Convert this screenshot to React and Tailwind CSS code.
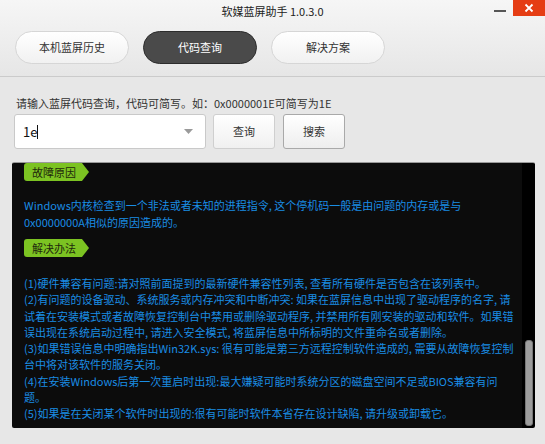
import React from "react";

const solutionLines = [
  "(1)硬件兼容有问题:请对照前面提到的最新硬件兼容性列表, 查看所有硬件是否包含在该列表中。",
  "(2)有问题的设备驱动、系统服务或内存冲突和中断冲突: 如果在蓝屏信息中出现了驱动程序的名字, 请",
  "试着在安装模式或者故障恢复控制台中禁用或删除驱动程序, 并禁用所有刚安装的驱动和软件。如果错",
  "误出现在系统启动过程中, 请进入安全模式, 将蓝屏信息中所标明的文件重命名或者删除。",
  "(3)如果错误信息中明确指出Win32K.sys: 很有可能是第三方远程控制软件造成的, 需要从故障恢复控制",
  "台中将对该软件的服务关闭。",
  "(4)在安装Windows后第一次重启时出现:最大嫌疑可能时系统分区的磁盘空间不足或BIOS兼容有问",
  "题。",
  "(5)如果是在关闭某个软件时出现的:很有可能时软件本省存在设计缺陷, 请升级或卸载它。",
];

function Tag({ children }) {
  return (
    <div className="w-[65px] h-[18px] bg-[#7cc322] rounded-l-[3px] pl-[8px] text-[11px] leading-[18px] text-[#1f2a0c] [clip-path:polygon(0_0,calc(100%-7px)_0,100%_50%,calc(100%-7px)_100%,0_100%)]">
      {children}
    </div>
  );
}

function TabButton({ label, active }) {
  return (
    <div
      className={`w-[114px] h-[33px] rounded-full flex items-center justify-center text-[11px] border ${
        active
          ? "bg-[#4a4a4a] border-[#2c2c2c] text-white"
          : "bg-gradient-to-b from-white to-[#f1f1f1] border-[#d6d6d6] text-[#333]"
      }`}
    >
      {label}
    </div>
  );
}

export default function App() {
  return (
    <div className="w-[545px] h-[444px] overflow-hidden bg-[#e7e7e7] flex flex-col font-['Noto_Sans_CJK_SC',sans-serif] text-[#333]">
      {/* title bar + tabs */}
      <div className="h-[77px] bg-gradient-to-b from-[#f6f6f6] to-[#e6e6e6] border-b border-[#cbcbcb]">
        <div className="h-[31px] flex items-start">
          <div className="flex-1" />
          <div className="pt-[3px] text-[11px] leading-[16px] text-[#222]">软媒蓝屏助手 1.0.3.0</div>
          <div className="flex-1 flex justify-end items-start">
            <div className="mt-[10px] mr-[7px] w-[12px] h-[2px] bg-[#555]" />
            <div className="w-[32px] h-[16px] bg-[#e53d14] flex items-center justify-center">
              <svg width="10" height="10" viewBox="0 0 10 10">
                <path d="M1.5 1.5 L8.5 8.5 M8.5 1.5 L1.5 8.5" stroke="white" strokeWidth="1.8" />
              </svg>
            </div>
          </div>
        </div>
        <div className="flex gap-[14px] pl-[15px]">
          <TabButton label="本机蓝屏历史" />
          <TabButton label="代码查询" active />
          <TabButton label="解决方案" />
        </div>
      </div>

      {/* query area */}
      <div className="pl-[12px] pt-[18px]">
        <div className="pl-[4px] h-[16px] text-[11px] leading-[16px] text-[#333]">
          请输入蓝屏代码查询，代码可简写。如：0x0000001E可简写为1E
        </div>
        <div className="mt-[3px] flex items-center h-[35px] pl-[2px]">
          <div className="w-[192px] h-[35px] bg-white border border-[#c9c9c9] rounded-[3px] flex items-center pl-[8px] pr-[12px]">
            <span className="text-[13px] text-[#111]">1e</span>
            <span className="w-px h-[14px] bg-[#111]" />
            <div className="flex-1" />
            <svg width="9" height="5" viewBox="0 0 9 5">
              <path d="M0 0 H9 L4.5 5 Z" fill="#9a9a9a" />
            </svg>
          </div>
          <div className="ml-[7px] w-[62px] h-[35px] rounded-[3px] border border-[#cfcfcf] bg-gradient-to-b from-white to-[#f0f0f0] flex items-center justify-center text-[11px] text-[#333]">
            查询
          </div>
          <div className="ml-[8px] w-[62px] h-[35px] rounded-[3px] border border-[#a9a9a9] bg-gradient-to-b from-white to-[#eeeeee] flex items-center justify-center text-[11px] text-[#333]">
            搜索
          </div>
        </div>

        {/* result panel */}
        <div className="mt-[13px] w-[523px] h-[266px] flex rounded-[2px] overflow-hidden border-t border-[#9a9a9a]">
          <div className="flex-1 bg-[#0c0c0c] pl-[12px] text-[11px] text-[#1a8de4]">
            <Tag>故障原因</Tag>
            <div className="mt-[16px] leading-[17px] whitespace-nowrap">
              <div>Windows内核检查到一个非法或者未知的进程指令, 这个停机码一般是由问题的内存或是与</div>
              <div>0x0000000A相似的原因造成的。</div>
            </div>
            <div className="mt-[8px]">
              <Tag>解决办法</Tag>
            </div>
            <div className="mt-[18px] leading-[16.3px] whitespace-nowrap">
              {solutionLines.map((line, i) => (
                <div key={i}>{line}</div>
              ))}
            </div>
          </div>
          <div className="w-[13px] bg-black pt-[177px] pl-[3px]">
            <div className="w-[8px] h-[86px] rounded-[3px] bg-[#9d9d9d] border border-[#777]" />
          </div>
        </div>
      </div>
    </div>
  );
}
